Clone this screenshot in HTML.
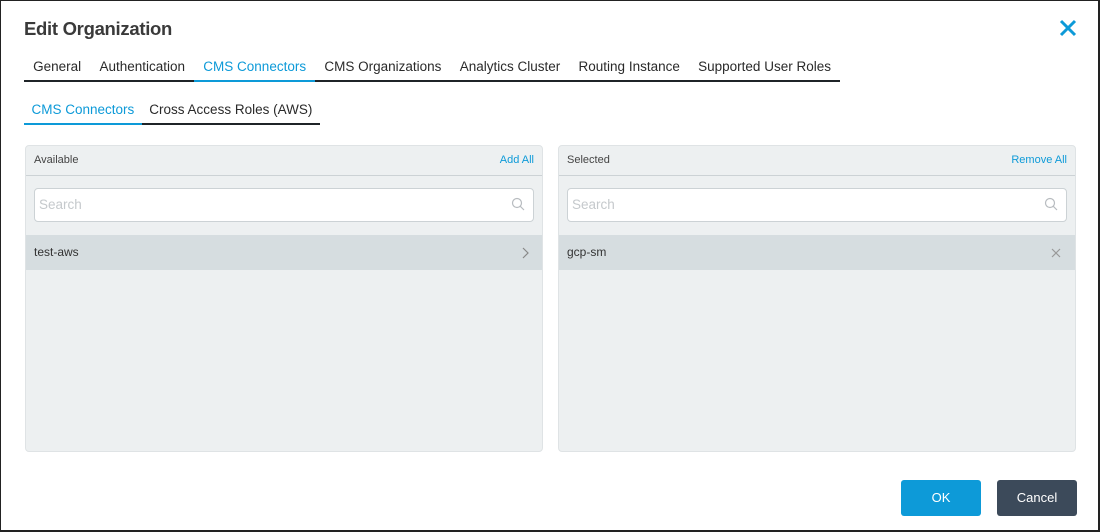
<!DOCTYPE html>
<html><head><style>
*{box-sizing:border-box;margin:0;padding:0}
body{width:1100px;height:532px;background:#fff;font-family:"Liberation Sans",sans-serif;position:relative;overflow:hidden}
.frame{position:absolute;left:0;top:0;width:1100px;height:532px;border:1px solid #222;border-right-width:2px;border-bottom-width:2px}
.abs{position:absolute}
h1{position:absolute;left:24px;top:18px;font-size:18.5px;font-weight:bold;color:#3a3a3a;letter-spacing:-0.3px}
.tabs{position:absolute;left:24px;top:58px;height:24px;border-bottom:2px solid #1f2428;display:flex;font-size:13.5px;color:#2a2a2a;white-space:nowrap}
.tabs div{padding:0 9.15px;height:24px;line-height:18px}
.tabs .a{color:#0d9ad8;border-bottom:2px solid #0d9ad8;margin-bottom:-2px;height:24px}
.sub div{padding:0 7.5px}
.panel{position:absolute;top:145px;width:518px;height:307px;background:#edf0f1;border:1px solid #dfe3e5;border-radius:4px}
.ph{height:30px;border-bottom:1px solid #ccd2d5;font-size:11px;color:#444;padding:8px 8px;display:flex;justify-content:space-between}
.ph span.l{color:#0d9ad8}
.search{position:absolute;left:8px;top:42px;width:500px;height:34px;background:#fff;border:1px solid #ccd2d5;border-radius:4px;font-size:13.5px;color:#c5c9cc;padding:8px 4px}
.row{position:absolute;left:0;top:89px;width:516px;height:35px;background:#d6dde0;font-size:12px;color:#333;padding:10px 8px}
.btn{position:absolute;top:480px;width:80px;height:36px;border-radius:3px;color:#fff;font-size:13px;text-align:center;line-height:36px}
</style></head><body>
<div class="frame"></div>
<h1>Edit Organization</h1>
<svg class="abs" style="left:1059px;top:19px" width="18" height="18"><path d="M2 2L16 16M16 2L2 16" stroke="#0d9ad8" stroke-width="3"/></svg>
<div class="tabs"><div>General</div><div>Authentication</div><div class="a">CMS Connectors</div><div>CMS Organizations</div><div>Analytics Cluster</div><div>Routing Instance</div><div>Supported User Roles</div></div>
<div class="tabs sub" style="top:101px"><div class="a">CMS Connectors</div><div>Cross Access Roles (AWS)</div></div>
<div class="panel" style="left:25px"><div class="ph">Available<span class="l">Add All</span></div>
<div class="search">Search<svg class="abs" style="right:8px;top:8px" width="14" height="14"><circle cx="6" cy="6" r="4.5" fill="none" stroke="#b8bcc0" stroke-width="1.2"/><path d="M9.3 9.3L13 13" stroke="#b8bcc0" stroke-width="1.2"/></svg></div>
<div class="row">test-aws<svg class="abs" style="right:12px;top:12px" width="8" height="12"><path d="M1 1L6 6L1 11" fill="none" stroke="#888" stroke-width="1.2"/></svg></div></div>
<div class="panel" style="left:558px"><div class="ph">Selected<span class="l">Remove All</span></div>
<div class="search">Search<svg class="abs" style="right:8px;top:8px" width="14" height="14"><circle cx="6" cy="6" r="4.5" fill="none" stroke="#b8bcc0" stroke-width="1.2"/><path d="M9.3 9.3L13 13" stroke="#b8bcc0" stroke-width="1.2"/></svg></div>
<div class="row">gcp-sm<svg class="abs" style="right:14px;top:13px" width="10" height="10"><path d="M1 1L9 9M9 1L1 9" stroke="#999" stroke-width="1.2"/></svg></div></div>
<div class="btn" style="left:901px;background:#0d9ad8">OK</div>
<div class="btn" style="left:997px;background:#3c4a5a">Cancel</div>
</body></html>
